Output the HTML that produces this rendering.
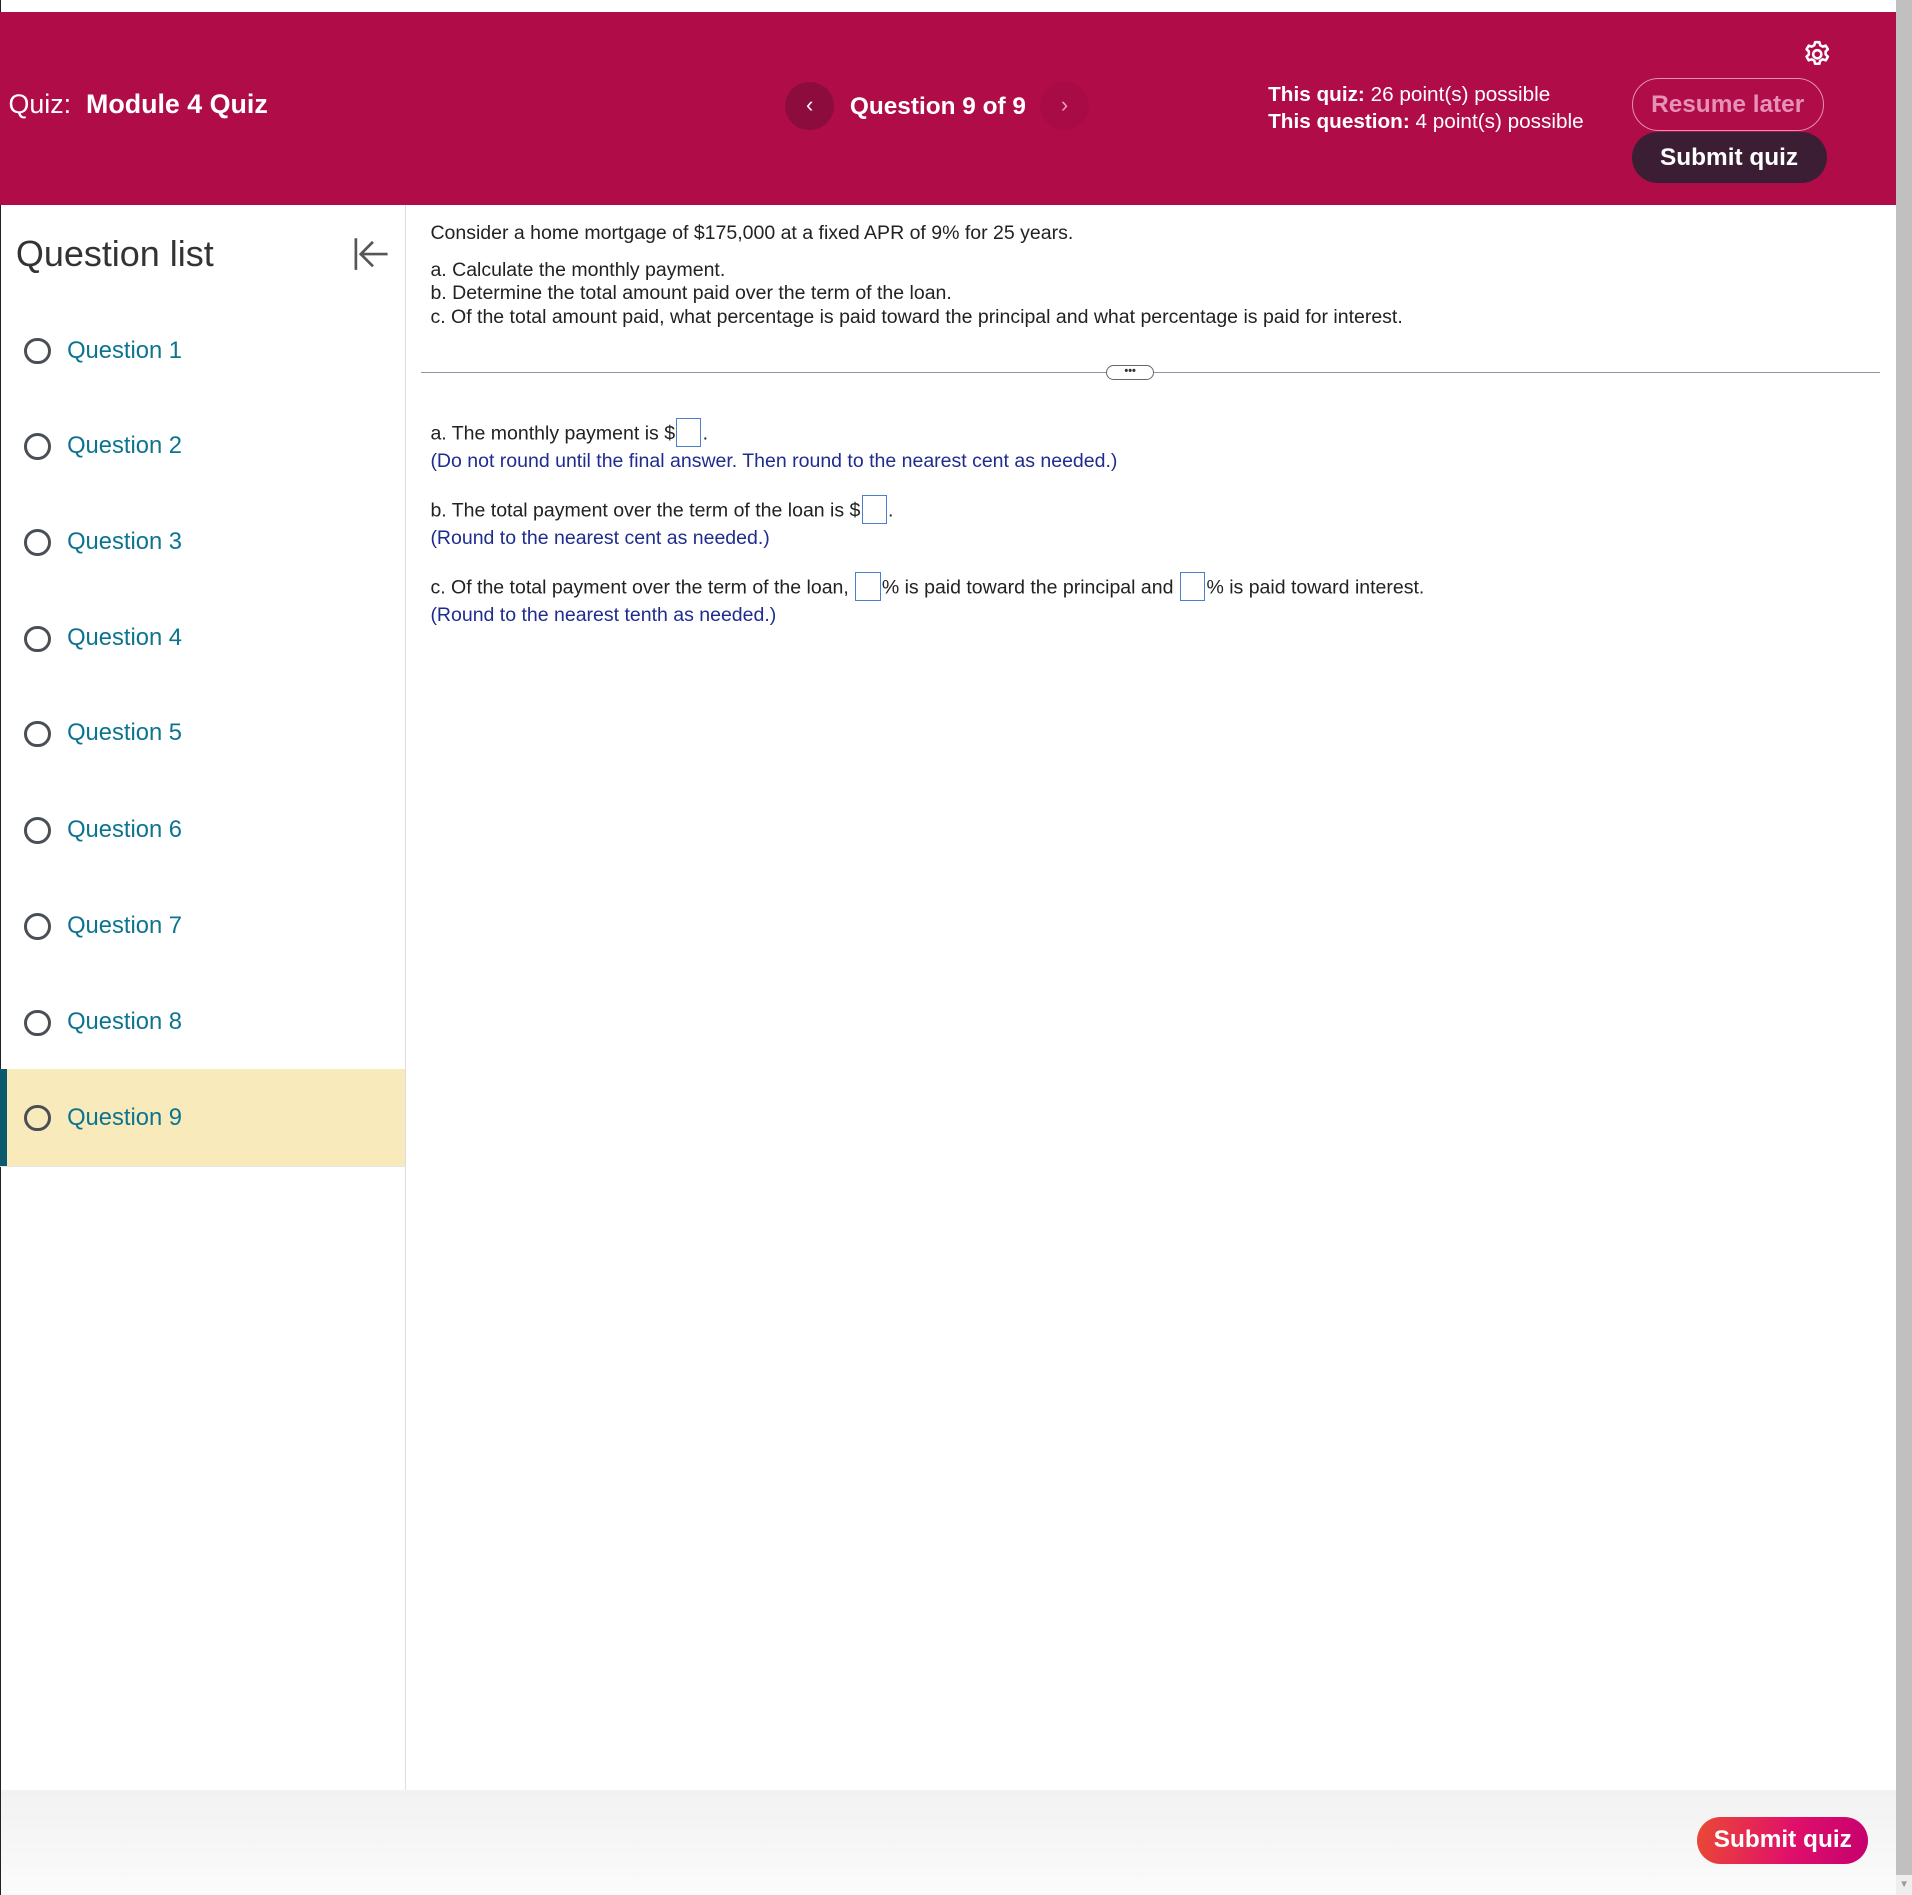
<!DOCTYPE html>
<html><head><meta charset="utf-8"><style>
html,body{margin:0;padding:0;width:1912px;height:1895px;overflow:hidden;background:#fff;font-family:"Liberation Sans",Arial,sans-serif}
#w{zoom:1.21939;position:relative;width:1568px;height:1554px;}
.a{position:absolute;white-space:nowrap}
.hdr{left:0;top:10px;width:1555px;height:158px;background:#b00c48}
.q{left:0;width:332px;height:79px}
.q .c{position:absolute;left:20px;top:29px;width:17px;height:17px;border:2.5px solid #4a4f56;border-radius:50%}
.q .t{position:absolute;left:55px;top:28px;font-size:19.5px;color:#0d7490}
.txt{font-size:16px;color:#222}
.blue{font-size:16px;color:#1f2c8f}
.box{display:inline-block;width:19px;height:22px;border:1px solid #4a7fc9;vertical-align:-6px;margin:0 1px}
</style></head><body><div id="w">
<div class="a" style="left:0;top:0;width:1px;height:1554px;background:#222"></div>
<div class="a hdr"></div>
<div class="a" style="left:7px;top:73px;font-size:22px;color:#fff">Quiz:&nbsp; <b>Module 4 Quiz</b></div>
<div class="a" style="left:644px;top:67px;width:40px;height:40px;border-radius:50%;background:#8d0c3e;color:#fff;text-align:center;line-height:38px;font-size:18px">‹</div>
<div class="a" style="left:853px;top:67px;width:40px;height:40px;border-radius:50%;background:#a80b46;color:#e9a0c0;text-align:center;line-height:38px;font-size:18px">›</div>
<div class="a" style="left:697px;top:76px;font-size:20px;font-weight:bold;color:#fff">Question 9 of 9</div>
<div class="a" style="left:1040px;top:67px;font-size:17px;color:#fff;line-height:22px"><b>This quiz:</b> 26 point(s) possible<br><b>This question:</b> 4 point(s) possible</div>
<svg class="a" style="left:1478px;top:32px" width="25" height="25" viewBox="0 0 24 24" fill="none" stroke="#fff" stroke-width="2" stroke-linejoin="round"><circle cx="12" cy="12" r="3.2"/><path d="M10.3 2.5h3.4l.6 2.4 2 1.1 2.4-.8 1.7 2.9-1.8 1.7v2.4l1.8 1.7-1.7 2.9-2.4-.8-2 1.1-.6 2.4h-3.4l-.6-2.4-2-1.1-2.4.8-1.7-2.9 1.8-1.7v-2.4l-1.8-1.7 1.7-2.9 2.4.8 2-1.1z"/></svg>
<div class="a" style="left:1338px;top:64px;width:156px;height:42px;border:1px solid #e48fb3;border-radius:26px;color:#e591b8;font-weight:bold;font-size:20px;text-align:center;line-height:42px">Resume later</div>
<div class="a" style="left:1338px;top:108px;width:160px;height:42px;border-radius:21px;background:#3b1e33;color:#fff;font-weight:bold;font-size:20px;text-align:center;line-height:42px">Submit quiz</div>
<div class="a" style="left:332px;top:168px;width:1px;height:1300px;background:#dcdde2"></div>
<div class="a" style="left:13px;top:191px;font-size:29.5px;color:#333">Question list</div>
<svg class="a" style="left:288px;top:194px" width="32" height="28" viewBox="0 0 32 28" fill="none" stroke="#555" stroke-width="2.2"><path d="M4 1v26M30 14H9M18 4 8 14l10 10"/></svg>
<div class="a q" style="top:248px"><div class="c"></div><div class="t">Question 1</div></div>
<div class="a q" style="top:326px"><div class="c"></div><div class="t">Question 2</div></div>
<div class="a q" style="top:405px"><div class="c"></div><div class="t">Question 3</div></div>
<div class="a q" style="top:484px"><div class="c"></div><div class="t">Question 4</div></div>
<div class="a q" style="top:562px"><div class="c"></div><div class="t">Question 5</div></div>
<div class="a q" style="top:641px"><div class="c"></div><div class="t">Question 6</div></div>
<div class="a q" style="top:720px"><div class="c"></div><div class="t">Question 7</div></div>
<div class="a q" style="top:799px"><div class="c"></div><div class="t">Question 8</div></div>
<div class="a q" style="top:877px;background:#f8eabb;border-bottom:1px solid #e6e6e6"><div class="a" style="left:0;top:0;width:6px;height:79px;background:#0b5a6e"></div><div class="c"></div><div class="t">Question 9</div></div>
<div class="a txt" style="left:353px;top:182px">Consider a home mortgage of $175,000 at a fixed APR of 9% for 25 years.</div>
<div class="a txt" style="left:353px;top:212px;line-height:19.6px">a. Calculate the monthly payment.<br>b. Determine the total amount paid over the term of the loan.<br>c. Of the total amount paid, what percentage is paid toward the principal and what percentage is paid for interest.</div>
<div class="a" style="left:345px;top:305px;width:1197px;height:1px;background:#8a95a5"></div>
<div class="a" style="left:907px;top:299px;width:38px;height:11px;border:1px solid #666;border-radius:7px;background:#fff;font-size:9px;line-height:9px;text-align:center;color:#333;font-weight:bold">•••</div>
<div class="a txt" style="left:353px;top:343px">a. The monthly payment is $<span class="box"></span>.</div>
<div class="a blue" style="left:353px;top:369px">(Do not round until the final answer. Then round to the nearest cent as needed.)</div>
<div class="a txt" style="left:353px;top:406px">b. The total payment over the term of the loan is $<span class="box"></span>.</div>
<div class="a blue" style="left:353px;top:432px">(Round to the nearest cent as needed.)</div>
<div class="a txt" style="left:353px;top:469px">c. Of the total payment over the term of the loan, <span class="box"></span>% is paid toward the principal and <span class="box"></span>% is paid toward interest.</div>
<div class="a blue" style="left:353px;top:495px">(Round to the nearest tenth as needed.)</div>
<div class="a" style="left:1px;top:1468px;width:1554px;height:86px;background:linear-gradient(#f2f2f2,#fbfbfb)"></div>
<div class="a" style="left:1392px;top:1490px;width:140px;height:39px;border-radius:20px;background:linear-gradient(100deg,#ea4a33,#e0106a 55%,#c5006e);color:#fff;font-weight:bold;font-size:20px;text-align:center;line-height:38px">Submit quiz</div>
<div class="a" style="left:1555px;top:0;width:13px;height:1554px;background:#c0c0c0"></div>
<div class="a" style="left:1555px;top:1538px;width:13px;height:16px;background:#eee;color:#999;font-size:8px;text-align:center;line-height:16px">▼</div>
</div></body></html>
